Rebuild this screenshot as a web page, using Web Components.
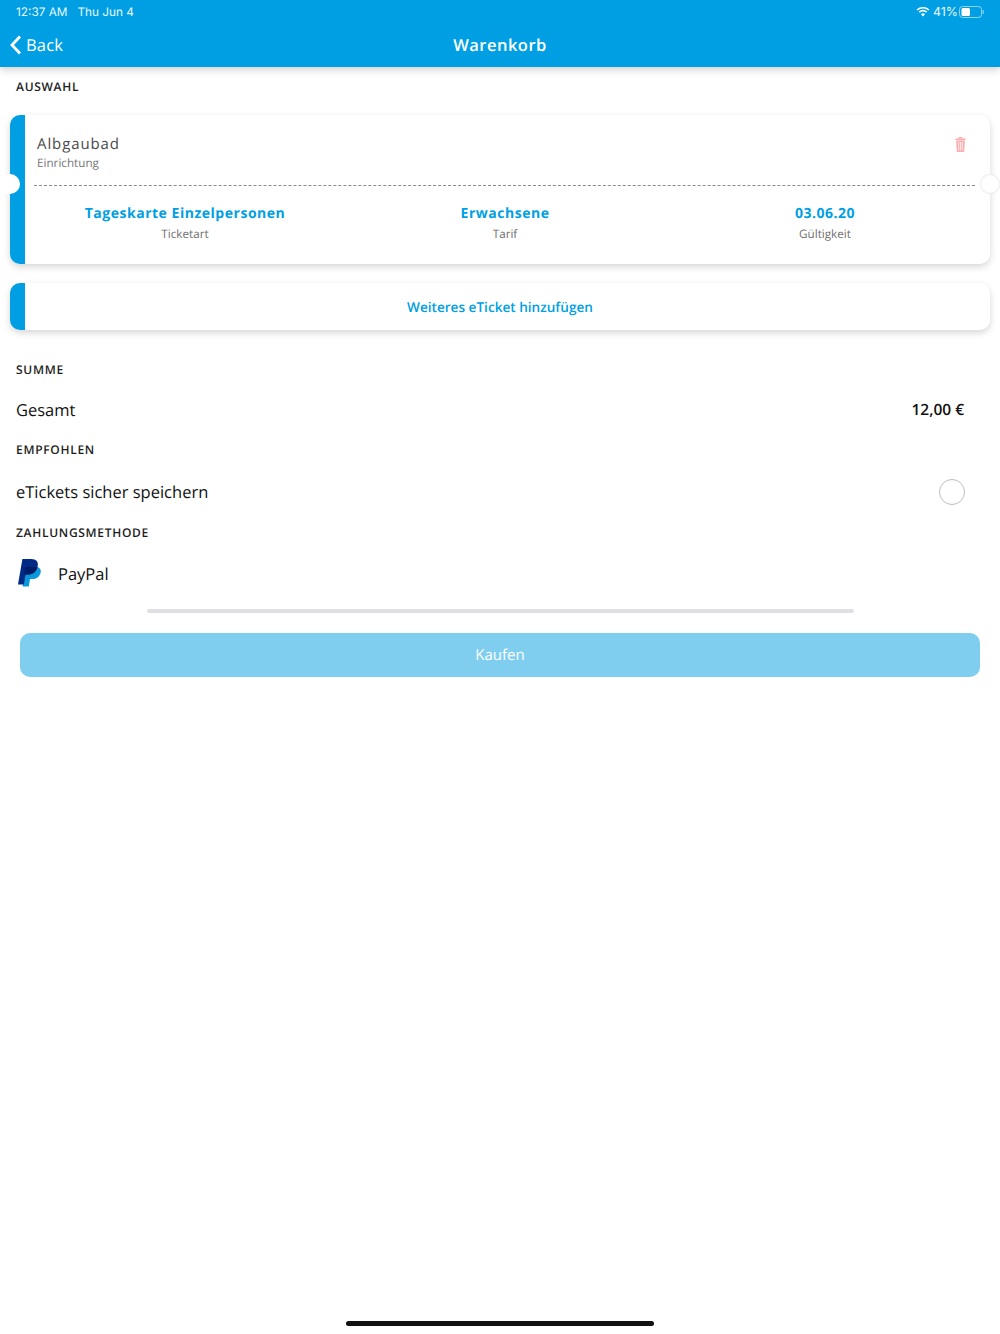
<!DOCTYPE html>
<html lang="de">
<head>
<meta charset="utf-8">
<title>Warenkorb</title>
<style>
  html, body { margin: 0; padding: 0; background: #fff; }
  body { font-family: 'Open Sans', sans-serif; text-rendering: geometricPrecision; }
</style>
</head>
<body>
<cart-page></cart-page>

<script>
class AppHeader extends HTMLElement {
  constructor() {
    super();
    this.attachShadow({ mode: 'open' });
    this.shadowRoot.innerHTML = `
      <style>
        :host {
          display: block;
          height: 67px;
          background: #009fe3;
          color: #fff;
          box-shadow: 0 2px 8px rgba(0,0,0,0.22);
          position: relative;
          z-index: 2;
        }
        .status {
          height: 23px;
          padding: 0 16px;
          display: flex;
          align-items: center;
          font-family: 'Inter', sans-serif;
          font-size: 11.8px;
          color: #eaf7fd;
        }
        .status .date { margin-left: 10px; }
        .status .right { margin-left: auto; display: flex; align-items: center; gap: 3px; }
        .status .pct { font-size: 12.4px; margin-right: -2px; }
        .nav {
          height: 43px;
          display: grid;
          grid-template-columns: 1fr auto 1fr;
          align-items: center;
          padding: 0 10px;
        }
        .back { display: flex; align-items: center; gap: 4px; font-size: 16.5px; letter-spacing: 0.15px; }
        .title { font-size: 16.5px; font-weight: 600; letter-spacing: 0.5px; }
      </style>
      <div class="status">
        <span>12:37 AM</span><span class="date">Thu Jun 4</span>
        <span class="right">
          <svg width="14" height="11" viewBox="0 0 14 11">
            <path d="M1 4 A9 9 0 0 1 13 4" fill="none" stroke="#fff" stroke-width="1.6"/>
            <path d="M3.2 6.2 A6 6 0 0 1 10.8 6.2" fill="none" stroke="#fff" stroke-width="1.6"/>
            <path d="M5 8.2 A3 3 0 0 1 9 8.2 L7 10.4 Z" fill="#fff"/>
          </svg>
          <span class="pct">41%</span>
          <svg width="25" height="12" viewBox="0 0 25 12">
            <rect x="0.5" y="0.5" width="22" height="11" rx="3" fill="none" stroke="#8fd5f3"/>
            <rect x="2.5" y="2" width="8.5" height="8" rx="1.5" fill="#fff"/>
            <rect x="23.5" y="4" width="1.2" height="4" rx="0.6" fill="#8fd5f3"/>
          </svg>
        </span>
      </div>
      <div class="nav">
        <span class="back">
          <svg width="12" height="20" viewBox="0 0 12 20"><path d="M10 1.5 L2 10 L10 18.5" fill="none" stroke="#fff" stroke-width="2.8"/></svg>
          <slot name="back"></slot>
        </span>
        <span class="title"><slot></slot></span>
      </div>`;
  }
}

class SectionLabel extends HTMLElement {
  constructor() {
    super();
    this.attachShadow({ mode: 'open' });
    this.shadowRoot.innerHTML = `
      <style>
        :host {
          display: block;
          padding: 0 16px;
          font-size: 12px;
          line-height: 16px;
          font-weight: 600;
          letter-spacing: 0.7px;
          text-transform: uppercase;
          color: #1d1d1d;
        }
      </style>
      <slot></slot>`;
  }
}

class TicketField extends HTMLElement {
  constructor() {
    super();
    this.attachShadow({ mode: 'open' });
    this.shadowRoot.innerHTML = `
      <style>
        :host { display: block; text-align: center; }
        .value { font-size: 14px; line-height: 20px; font-weight: 700; letter-spacing: 0.52px; color: #009fe3; }
        .name { font-size: 11.7px; line-height: 17px; margin-top: 2px; color: #6f6f6f; }
      </style>
      <div class="value"><slot></slot></div>
      <div class="name"><slot name="name"></slot></div>`;
  }
}

class TicketCard extends HTMLElement {
  constructor() {
    super();
    this.attachShadow({ mode: 'open' });
    this.shadowRoot.innerHTML = `
      <style>
        :host {
          display: block;
          margin: 0 10px;
          position: relative;
          background: #fff;
          border-left: 15px solid #009fe3;
          border-radius: 10px;
          box-shadow: 0 3px 7px rgba(0,0,0,0.16);
          height: 149px;
        }
        .top { display: flex; justify-content: space-between; padding: 20px 24px 0 12px; height: 50px; }
        .venue { font-size: 15px; line-height: 19px; letter-spacing: 0.9px; color: #4a4a4a; }
        .kind { font-size: 11.7px; line-height: 17px; margin-top: 1px; color: #767676; }
        .rule { border-top: 1px dashed #8a8a8a; margin: 0 15px 0 9px; height: 0; }
        .fields {
          display: grid;
          grid-template-columns: 320px 320px 320px;
          margin-top: 18px;
        }
        .notch {
          position: absolute;
          top: 59px;
          width: 20px;
          height: 20px;
          border-radius: 50%;
          background: #fff;
        }
        .notch.left { left: -25px; }
        .notch.right { right: -10px; box-shadow: inset 0 0 2px rgba(0,0,0,0.2); }
        svg { margin-top: 2px; }
      </style>
      <div class="top">
        <div>
          <div class="venue"><slot name="venue"></slot></div>
          <div class="kind"><slot name="kind"></slot></div>
        </div>
        <svg width="11" height="15" viewBox="0 0 12 15" preserveAspectRatio="none" fill="#fbb0b0">
          <rect x="4" y="0" width="4" height="1.6"/>
          <rect x="0.5" y="1.4" width="11" height="1.6"/>
          <path d="M1.2 3.6 H10.8 L10 15 H2 Z"/>
          <path d="M4 5 V13.4 M6 5 V13.4 M8 5 V13.4" stroke="#fff" stroke-width="0.7"/>
        </svg>
      </div>
      <div class="rule"></div>
      <div class="fields"><slot></slot></div>
      <span class="notch left"></span>
      <span class="notch right"></span>`;
  }
}

class AddTicket extends HTMLElement {
  constructor() {
    super();
    this.attachShadow({ mode: 'open' });
    this.shadowRoot.innerHTML = `
      <style>
        :host {
          display: flex;
          align-items: center;
          justify-content: center;
          height: 47px;
          margin: 0 10px;
          padding-right: 15px;
          background: #fff;
          border-left: 15px solid #009fe3;
          border-radius: 10px;
          box-shadow: 0 3px 7px rgba(0,0,0,0.16);
          font-size: 13.6px;
          font-weight: 600;
          color: #009fe3;
        }
      </style>
      <slot></slot>`;
  }
}

class LineRow extends HTMLElement {
  constructor() {
    super();
    this.attachShadow({ mode: 'open' });
    this.shadowRoot.innerHTML = `
      <style>
        :host {
          display: flex;
          align-items: center;
          justify-content: space-between;
          padding: 0 36px 0 16px;
          font-size: 16.5px;
          color: #111;
        }
        .end { font-size: 15.5px; font-weight: 600; }
      </style>
      <slot></slot>
      <span class="end"><slot name="end"></slot></span>`;
  }
}

class RadioCircle extends HTMLElement {
  constructor() {
    super();
    this.attachShadow({ mode: 'open' });
    this.shadowRoot.innerHTML = `
      <style>
        :host {
          display: block;
          box-sizing: border-box;
          width: 26px;
          height: 26px;
          margin: 2px -1px 0 0;
          border: 1px solid #bdbdbd;
          border-radius: 50%;
        }
      </style>`;
  }
}

class PaypalRow extends HTMLElement {
  constructor() {
    super();
    this.attachShadow({ mode: 'open' });
    this.shadowRoot.innerHTML = `
      <style>
        :host {
          display: flex;
          align-items: center;
          gap: 17px;
          padding: 0 18px;
          font-size: 16.5px;
          color: #111;
        }
      </style>
      <svg width="23" height="28" viewBox="0 0 23 28">
        <path d="M7 8 H18 C22 8 23.6 11 22.4 14.5 C21 18.4 18 20 14.4 20 H12 L10.8 27.4 H4.6 Z" fill="#0a97dc"/>
        <path d="M4.4 0 H13 C18.4 0 20.8 3 19.6 7.6 C18.2 13 14.6 15.6 10 15.6 H7.6 L5.8 25.4 H0 Z" fill="#012a86"/>
        <path d="M7.4 8 H19.6 C18.2 13 14.6 15.6 10 15.6 H6.2 Z" fill="#001c64"/>
      </svg>
      <slot></slot>`;
  }
}

class BuyButton extends HTMLElement {
  constructor() {
    super();
    this.attachShadow({ mode: 'open' });
    this.shadowRoot.innerHTML = `
      <style>
        :host {
          display: flex;
          align-items: center;
          justify-content: center;
          height: 44px;
          margin: 0 20px;
          border-radius: 10px;
          background: #7fcef0;
          color: #fff;
          font-size: 15px;
        }
      </style>
      <slot></slot>`;
  }
}

class CartPage extends HTMLElement {
  constructor() {
    super();
    this.attachShadow({ mode: 'open' });
    this.shadowRoot.innerHTML = `
      <style>
        :host {
          display: flex;
          flex-direction: column;
          height: 1334px;
          overflow: hidden;
          background: #fff;
        }
        .divider { height: 4px; width: 707px; margin: 0 auto; border-radius: 2px; background: #dfe0e6; }
        .home { height: 5px; width: 308px; margin: auto auto 8px; border-radius: 3px; background: #111; }
      </style>
      <app-header><span slot="back">Back</span>Warenkorb</app-header>
      <section-label style="margin-top:12px">Auswahl</section-label>
      <ticket-card style="margin-top:20px">
        <span slot="venue">Albgaubad</span>
        <span slot="kind">Einrichtung</span>
        <ticket-field>Tageskarte Einzelpersonen<span slot="name">Ticketart</span></ticket-field>
        <ticket-field>Erwachsene<span slot="name">Tarif</span></ticket-field>
        <ticket-field>03.06.20<span slot="name">Gültigkeit</span></ticket-field>
      </ticket-card>
      <add-ticket style="margin-top:19px">Weiteres eTicket hinzufügen</add-ticket>
      <section-label style="margin-top:32px">Summe</section-label>
      <line-row style="margin-top:13px;height:36px">Gesamt<span slot="end">12,00 €</span></line-row>
      <section-label style="margin-top:15px">Empfohlen</section-label>
      <line-row style="margin-top:14px;height:38px">eTickets sicher speichern<radio-circle slot="end"></radio-circle></line-row>
      <section-label style="margin-top:15px">Zahlungsmethode</section-label>
      <paypal-row style="margin-top:14px;height:36px">PayPal</paypal-row>
      <div class="divider" style="margin-top:18px"></div>
      <buy-button style="margin-top:20px">Kaufen</buy-button>
      <div class="home"></div>`;
  }
}

customElements.define('app-header', AppHeader);
customElements.define('section-label', SectionLabel);
customElements.define('ticket-field', TicketField);
customElements.define('ticket-card', TicketCard);
customElements.define('add-ticket', AddTicket);
customElements.define('line-row', LineRow);
customElements.define('radio-circle', RadioCircle);
customElements.define('paypal-row', PaypalRow);
customElements.define('buy-button', BuyButton);
customElements.define('cart-page', CartPage);
</script>
</body>
</html>
